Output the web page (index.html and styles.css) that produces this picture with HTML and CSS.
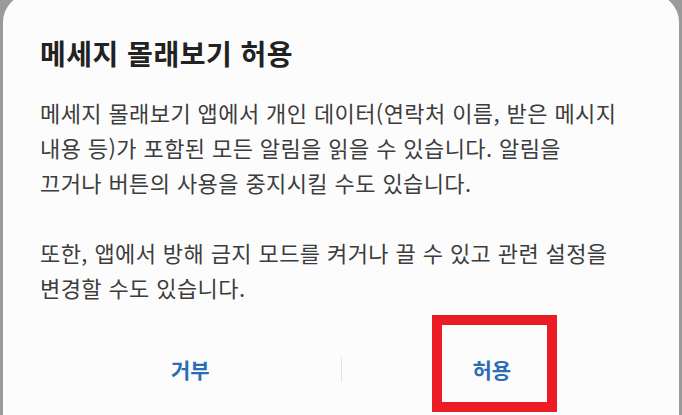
FILE: index.html
```html
<!DOCTYPE html>
<html lang="ko">
<head>
<meta charset="utf-8">
<link rel="stylesheet" href="styles.css">
</head>
<body>
<div class="dialog">
  <h1 class="title">메세지 몰래보기 허용</h1>
  <p class="body">메세지 몰래보기 앱에서 개인 데이터(연락처 이름, 받은 메시지<br>내용 등)가 포함된 모든 알림을 읽을 수 있습니다. 알림을<br>끄거나 버튼의 사용을 중지시킬 수도 있습니다.</p>
  <p class="body">또한, 앱에서 방해 금지 모드를 켜거나 끌 수 있고 관련 설정을<br>변경할 수도 있습니다.</p>
  <div class="actions">
    <div class="btn">거부</div>
    <div class="divider"></div>
    <div class="btn">허용</div>
  </div>
</div>
<div class="highlight"></div>
</body>
</html>
```
FILE: styles.css
```css
html, body {
  margin: 0;
  padding: 0;
}
body {
  background: #9a9a9a;
  width: 682px;
  height: 415px;
  overflow: hidden;
  position: relative;
  font-family: "Noto Sans CJK KR", "Noto Sans", sans-serif;
}
.dialog {
  margin: -6px 3px 0 3px;
  background: #fcfcfc;
  border-radius: 28px 28px 0 0;
  padding: 41px 20px 0 37px;
  height: 430px;
  box-sizing: border-box;
}
.title {
  margin: 0;
  font-size: 28px;
  font-weight: 700;
  line-height: 36px;
  color: #222222;
  letter-spacing: 0.5px;
}
.body {
  margin: 24px 0 0 0;
  font-size: 22px;
  line-height: 35px;
  color: #3d3d3d;
  letter-spacing: 0.4px;
  white-space: nowrap;
}
.body + .body {
  margin-top: 35px;
}
.actions {
  display: flex;
  align-items: center;
  margin: 34px 17px 0 0;
  height: 60px;
}
.btn {
  flex: 1;
  text-align: center;
  font-size: 21px;
  font-weight: 700;
  color: #2a6db5;
}
.divider {
  width: 1px;
  height: 25px;
  background: #e2e2e2;
}
.highlight {
  position: absolute;
  left: 432px;
  top: 315px;
  width: 125px;
  height: 97px;
  box-sizing: border-box;
  border: 10px solid #ec1c24;
}
```
